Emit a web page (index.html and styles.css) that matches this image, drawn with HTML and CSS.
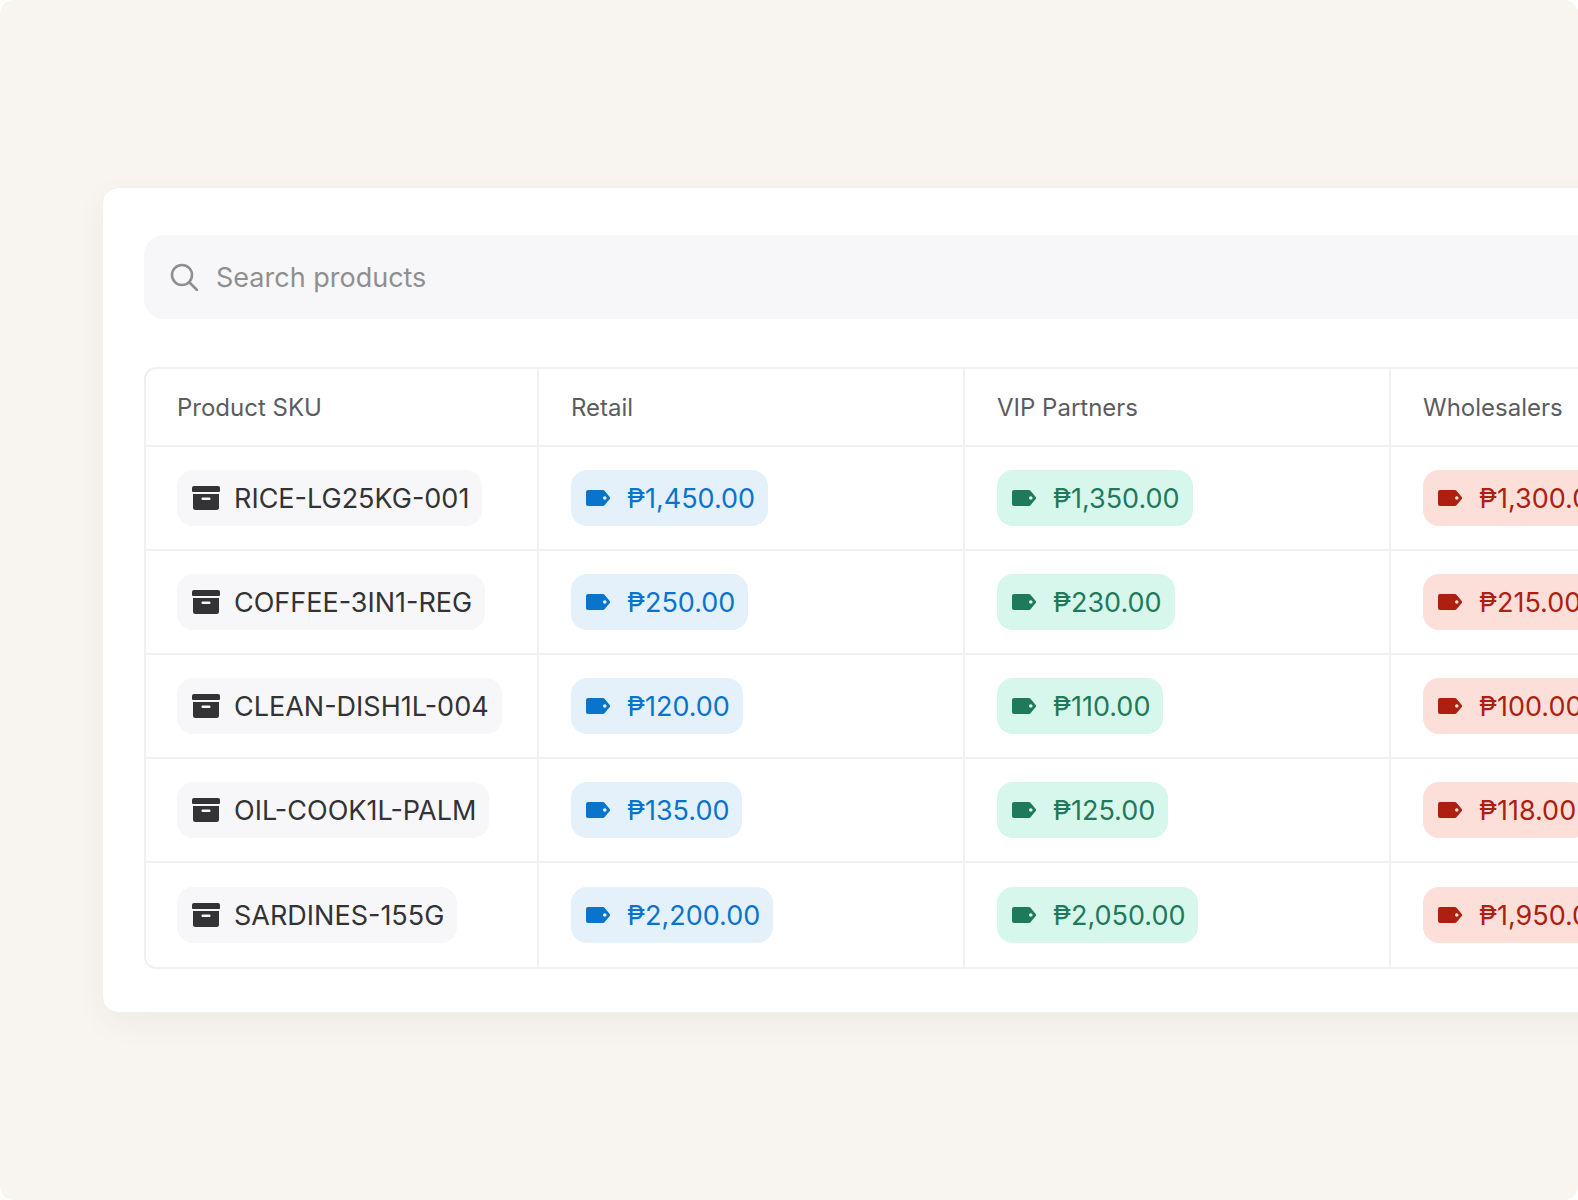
FILE: index.html
```html
<!DOCTYPE html>
<html lang="en">
<head>
<meta charset="utf-8">
<title>Product pricing</title>
<link rel="stylesheet" href="styles.css">
</head>
<body>
<svg class="defs" width="0" height="0" aria-hidden="true">
  <symbol id="box" viewBox="0 0 28 24"><path d="M2 0h24a2 2 0 0 1 2 2v3a1 1 0 0 1-1 1H1a1 1 0 0 1-1-1V2a2 2 0 0 1 2-2Z"/><path fill-rule="evenodd" d="M1 8h26v13.500a2.500 2.500 0 0 1-2.500 2.500h-21A2.500 2.500 0 0 1 1 21.500V8Zm9.500 3.500a1 1 0 0 0-1 1v.5a1 1 0 0 0 1 1h7a1 1 0 0 0 1-1v-.5a1 1 0 0 0-1-1Z"/></symbol>
  <symbol id="tag" viewBox="0 0 24 16"><path fill-rule="evenodd" d="M2 0h15a2 2 0 0 1 1.500.7l5 6a2 2 0 0 1 0 2.600l-5 6a2 2 0 0 1-1.500.7H2a2 2 0 0 1-2-2V2a2 2 0 0 1 2-2Zm15 8a1.800 1.800 0 1 0 3.600 0a1.800 1.800 0 1 0-3.600 0Z"/></symbol>
</svg>
<main class="canvas">
  <section class="card">
    <div class="search">
      <svg class="search-icon" viewBox="0 0 28 28" fill="none" stroke="currentColor" stroke-width="2.600" stroke-linecap="round"><circle cx="12" cy="12" r="10"/><path d="M19.500 19.500 27 27"/></svg>
      <span>Search products</span>
    </div>
    <div class="table">
      <div class="cell head">Product SKU</div>
      <div class="cell head">Retail</div>
      <div class="cell head">VIP Partners</div>
      <div class="cell head last">Wholesalers</div>

      <div class="cell"><span class="chip sku"><svg class="ic-box"><use href="#box"/></svg>RICE-LG25KG-001</span></div>
      <div class="cell"><span class="chip blue"><svg class="ic-tag"><use href="#tag"/></svg>₱1,450.00</span></div>
      <div class="cell"><span class="chip green"><svg class="ic-tag"><use href="#tag"/></svg>₱1,350.00</span></div>
      <div class="cell last"><span class="chip red"><svg class="ic-tag"><use href="#tag"/></svg>₱1,300.00</span></div>

      <div class="cell"><span class="chip sku"><svg class="ic-box"><use href="#box"/></svg>COFFEE-3IN1-REG</span></div>
      <div class="cell"><span class="chip blue"><svg class="ic-tag"><use href="#tag"/></svg>₱250.00</span></div>
      <div class="cell"><span class="chip green"><svg class="ic-tag"><use href="#tag"/></svg>₱230.00</span></div>
      <div class="cell last"><span class="chip red"><svg class="ic-tag"><use href="#tag"/></svg>₱215.00</span></div>

      <div class="cell"><span class="chip sku"><svg class="ic-box"><use href="#box"/></svg>CLEAN-DISH1L-004</span></div>
      <div class="cell"><span class="chip blue"><svg class="ic-tag"><use href="#tag"/></svg>₱120.00</span></div>
      <div class="cell"><span class="chip green"><svg class="ic-tag"><use href="#tag"/></svg>₱110.00</span></div>
      <div class="cell last"><span class="chip red"><svg class="ic-tag"><use href="#tag"/></svg>₱100.00</span></div>

      <div class="cell"><span class="chip sku"><svg class="ic-box"><use href="#box"/></svg>OIL-COOK1L-PALM</span></div>
      <div class="cell"><span class="chip blue"><svg class="ic-tag"><use href="#tag"/></svg>₱135.00</span></div>
      <div class="cell"><span class="chip green"><svg class="ic-tag"><use href="#tag"/></svg>₱125.00</span></div>
      <div class="cell last"><span class="chip red"><svg class="ic-tag"><use href="#tag"/></svg>₱118.00</span></div>

      <div class="cell bottom"><span class="chip sku"><svg class="ic-box"><use href="#box"/></svg>SARDINES-155G</span></div>
      <div class="cell bottom"><span class="chip blue"><svg class="ic-tag"><use href="#tag"/></svg>₱2,200.00</span></div>
      <div class="cell bottom"><span class="chip green"><svg class="ic-tag"><use href="#tag"/></svg>₱2,050.00</span></div>
      <div class="cell bottom last"><span class="chip red"><svg class="ic-tag"><use href="#tag"/></svg>₱1,950.00</span></div>
    </div>
  </section>
</main>
</body>
</html>
```
FILE: styles.css
```css
* { box-sizing: border-box; }
html, body { margin: 0; height: 100%; background: #fff; overflow: hidden; }
body { font-family: Inter, "Liberation Sans", sans-serif; }
.defs { position: absolute; }
.canvas {
  width: 100%;
  height: 1200px;
  background: #f8f5f1;
  border-radius: 14px;
  padding: 187px 0 0 102px;
  overflow: hidden;
}
.card {
  width: 1800px;
  height: 826px;
  background: #fff;
  border: 1px solid #f3f0ec;
  border-radius: 16px;
  padding: 47px 41px;
  box-shadow: 0 10px 30px rgba(60, 50, 40, 0.05);
}
.search {
  display: flex;
  align-items: center;
  gap: 18px;
  height: 84px;
  padding: 0 26px;
  background: #f7f7f9;
  border-radius: 20px;
  font-size: 27px;
  color: #8f8f8f;
}
.search-icon { width: 28px; height: 28px; flex: none; color: #8f8f8f; }
.table {
  display: grid;
  grid-template-columns: 393px 426px 426px 426px;
  grid-template-rows: 78px repeat(5, 104px);
  margin-top: 48px;
  border: 2px solid #f0f0f2;
  border-radius: 12px;
  width: 1680px;
}
.cell {
  display: flex;
  align-items: center;
  padding-left: 31px;
  border-right: 2px solid #f0f0f2;
  border-bottom: 2px solid #f0f0f2;
}
.cell.last { border-right: 0; }
.cell.bottom { border-bottom: 0; }
.head { font-size: 24px; color: #5c5c60; font-weight: 400; }
.cell:not(:nth-child(4n+1)) { padding-left: 32px; }
.chip {
  display: inline-flex;
  align-items: center;
  height: 56px;
  padding: 0 13px 0 15px;
  border-radius: 16px;
  font-size: 27px;
  white-space: nowrap;
}
.sku { background: #f7f7f9; color: #333336; gap: 14px; }
.blue { background: #e4f1fb; color: #0a74cc; }
.green { background: #d8f7ec; color: #1f7a5c; }
.red { background: #fcdfd9; color: #ad2010; }
.ic-box { width: 28px; height: 24px; fill: #333336; flex: none; }
.ic-tag { width: 24px; height: 16px; fill: currentColor; flex: none; margin-right: 17px; }
```
